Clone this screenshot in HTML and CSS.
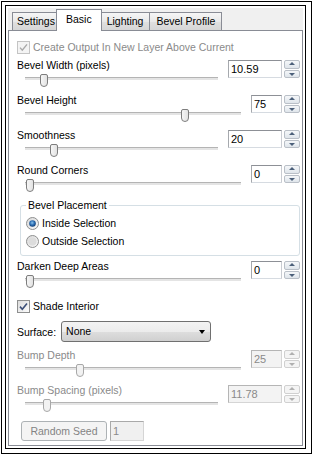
FILE: index.html
```html
<!DOCTYPE html>
<html>
<head>
<meta charset="utf-8">
<link rel="stylesheet" href="styles.css">
</head>
<body>
<div class="outer">
 <div class="inner">
  <div class="dialog">
   <div class="tabs">
    <div class="tab">Settings</div>
    <div class="tab active">Basic</div>
    <div class="tab">Lighting</div>
    <div class="tab">Bevel Profile</div>
   </div>
   <div class="page">
    <div class="check-row disabled">
     <span class="cbox"><svg width="11" height="11" viewBox="0 0 11 11"><path d="M2 5.6 L4.3 8.2 L9 2.4" fill="none" stroke="#a9a9a9" stroke-width="1.4"/></svg></span>
     <span>Create Output In New Layer Above Current</span>
    </div>

    <div class="field first">
     <div class="fcol">
      <div class="label">Bevel Width (pixels)</div>
      <div class="slider"><div class="track"></div><div class="thumb" style="left:15px"></div></div>
     </div>
     <div class="spin wide"><div class="edit">10.59</div><div class="arrows"><span class="up"></span><span class="down"></span></div></div>
    </div>

    <div class="field">
     <div class="fcol">
      <div class="label">Bevel Height</div>
      <div class="slider"><div class="track"></div><div class="thumb" style="left:156px"></div></div>
     </div>
     <div class="spin narrow"><div class="edit">75</div><div class="arrows"><span class="up"></span><span class="down"></span></div></div>
    </div>

    <div class="field">
     <div class="fcol">
      <div class="label">Smoothness</div>
      <div class="slider"><div class="track"></div><div class="thumb" style="left:25px"></div></div>
     </div>
     <div class="spin wide"><div class="edit">20</div><div class="arrows"><span class="up"></span><span class="down"></span></div></div>
    </div>

    <div class="field">
     <div class="fcol">
      <div class="label">Round Corners</div>
      <div class="slider"><div class="track"></div><div class="thumb" style="left:1px"></div></div>
     </div>
     <div class="spin narrow"><div class="edit">0</div><div class="arrows"><span class="up"></span><span class="down"></span></div></div>
    </div>

    <fieldset class="group">
     <legend>Bevel Placement</legend>
     <div class="radio-row">
      <svg class="radio" width="13" height="13" viewBox="0 0 13 13">
       <defs>
        <radialGradient id="dot" cx="45%" cy="40%" r="60%"><stop offset="0" stop-color="#8cc4ec"/><stop offset="0.55" stop-color="#2b6db3"/><stop offset="1" stop-color="#133e73"/></radialGradient>
        <linearGradient id="rbg" x1="0" y1="0" x2="1" y2="1"><stop offset="0" stop-color="#d8d8d8"/><stop offset="1" stop-color="#fbfbfb"/></linearGradient>
       </defs>
       <circle cx="6.5" cy="6.5" r="6" fill="url(#rbg)" stroke="#8e8f8f"/>
       <circle cx="6.5" cy="6.5" r="3.3" fill="url(#dot)"/>
      </svg>
      <span>Inside Selection</span>
     </div>
     <div class="radio-row">
      <svg class="radio" width="13" height="13" viewBox="0 0 13 13">
       <circle cx="6.5" cy="6.5" r="6" fill="url(#rbg)" stroke="#8e8f8f"/>
       <circle cx="6.5" cy="6.5" r="4" fill="#dcdcdc"/>
      </svg>
      <span>Outside Selection</span>
     </div>
    </fieldset>

    <div class="field darken">
     <div class="fcol">
      <div class="label">Darken Deep Areas</div>
      <div class="slider"><div class="track"></div><div class="thumb" style="left:1px"></div></div>
     </div>
     <div class="spin narrow"><div class="edit">0</div><div class="arrows"><span class="up"></span><span class="down"></span></div></div>
    </div>

    <div class="check-row shade">
     <span class="cbox on"><svg width="11" height="11" viewBox="0 0 11 11"><path d="M2 5.6 L4.3 8.2 L9 2.4" fill="none" stroke="#3c4f78" stroke-width="1.6"/></svg></span>
     <span>Shade Interior</span>
    </div>

    <div class="surface-row">
     <span class="surface-label">Surface:</span>
     <div class="combo"><span>None</span><span class="caret"></span></div>
    </div>

    <div class="field bump disabled">
     <div class="fcol">
      <div class="label">Bump Depth</div>
      <div class="slider"><div class="track"></div><div class="thumb" style="left:51px"></div></div>
     </div>
     <div class="spin narrow"><div class="edit">25</div><div class="arrows"><span class="up"></span><span class="down"></span></div></div>
    </div>

    <div class="field disabled">
     <div class="fcol">
      <div class="label">Bump Spacing (pixels)</div>
      <div class="slider"><div class="track"></div><div class="thumb" style="left:18px"></div></div>
     </div>
     <div class="spin wide"><div class="edit">11.78</div><div class="arrows"><span class="up"></span><span class="down"></span></div></div>
    </div>

    <div class="button-row">
     <div class="btn">Random Seed</div>
     <div class="seed">1</div>
    </div>
   </div>
  </div>
 </div>
</div>
</body>
</html>
```
FILE: styles.css
```css
* { box-sizing: border-box; }
html, body { margin: 0; padding: 0; background: #fff; }
body {
  font-family: "Liberation Sans", Arial, sans-serif;
  font-size: 10.5px;
  color: #000;
  width: 312px;
  height: 455px;
  overflow: hidden;
}
.outer {
  margin: 1px 0 0 1px;
  width: 311px;
  border: 1px solid #000;
  padding: 3px 5px 4px 3px;
  background: #fff;
}
.inner {
  height: 444px;
  border: 1px solid #000;
  padding: 2px;
  background: #fff;
}
.dialog {
  height: 100%;
  display: flex;
  flex-direction: column;
  background: #f0f0f0;
}
.tabs {
  height: 22px;
  flex: none;
  display: flex;
  align-items: flex-end;
  padding-left: 4px;
}
.tab {
  height: 18px;
  line-height: 16px;
  padding: 0 6px;
  border: 1px solid #898c95;
  border-bottom: none;
  margin-right: -1px;
  background: linear-gradient(#f6f6f6, #e9e9e9 50%, #e0e0e0 51%, #d6d6d6);
  white-space: nowrap;
}
.tab:first-child { padding: 0 4px; }
.tab.active {
  height: 22px;
  line-height: 18px;
  margin: 0 -2px -1px -3px;
  padding: 0 9px;
  background: #fff;
  position: relative;
  z-index: 1;
}
.page {
  flex: 1;
  border: 1px solid #898c95;
  background: #fff;
  padding: 10px 2px 0 8px;
}
.check-row {
  display: flex;
  align-items: center;
  gap: 3px;
  height: 13px;
  line-height: 13px;
  white-space: nowrap;
}
.check-row.disabled { color: #8a8a8a; }
.cbox {
  width: 13px;
  height: 13px;
  border: 1px solid #8e8f8f;
  background: linear-gradient(135deg, #dcdcdc, #fcfcfc);
  display: flex;
  align-items: center;
  justify-content: center;
  flex: none;
}
.check-row.disabled .cbox { border-color: #c4c4c4; background: #f4f4f4; }
.field {
  display: flex;
  align-items: flex-start;
  gap: 10px;
  margin-top: 6px;
}
.field.first { margin-top: 5px; }
.field.darken { margin-top: 4px; }
.field.bump { margin-top: 7px; }
.fcol { flex: 1; min-width: 0; }
.label {
  height: 13px;
  line-height: 13px;
  white-space: nowrap;
}
.field.disabled .label { color: #8a8a8a; }
.slider {
  position: relative;
  height: 14px;
  margin: 2px 0 0 8px;
}
.track {
  position: absolute;
  left: 0;
  right: 0;
  top: 3px;
  height: 3px;
  border-top: 1px solid #b4b4b4;
  background: #e4e4e4;
}
.thumb {
  position: absolute;
  top: 0;
  width: 8px;
  height: 13px;
  border: 1px solid #7d7d7d;
  border-radius: 2px 2px 4px 4px;
  background: linear-gradient(90deg, #f6f6f6, #e2e2e2);
}
.field.disabled .thumb { border-color: #a8a8a8; background: #f2f2f2; }
.spin {
  display: flex;
  margin-top: 1px;
  height: 18px;
  flex: none;
}
.edit {
  width: 54px;
  border: 1px solid;
  border-color: #8d9096 #c9ccd2 #d6dbe1 #a6a9ae;
  padding-left: 2px;
  line-height: 16px;
  background: #fff;
  font-size: 11px;
}
.spin.narrow .edit { width: 31px; }
.field.disabled .edit { background: #f3f3f3; color: #8a8a8a; border-color: #b5b5b5 #d5d5d5 #d5d5d5 #b5b5b5; }
.arrows {
  width: 16px;
  margin-left: 2px;
  display: flex;
  flex-direction: column;
  gap: 1px;
}
.arrows span {
  flex: 1;
  border: 1px solid #b9bfc7;
  border-radius: 2px;
  background: linear-gradient(#f5f7f9, #dfe5eb);
  position: relative;
}
.arrows span::after {
  content: "";
  position: absolute;
  left: 50%;
  top: 50%;
  margin-left: -3px;
  border-left: 3px solid transparent;
  border-right: 3px solid transparent;
}
.arrows .up::after { border-bottom: 3px solid #4c607a; margin-top: -2px; }
.arrows .down::after { border-top: 3px solid #4c607a; margin-top: -1px; }
.field.disabled .arrows span { border-color: #d0d0d0; background: #f4f4f4; }
.field.disabled .arrows span::after { border-top-color: #b0b0b0; border-bottom-color: #b0b0b0; }
.group {
  margin: 6px 0 0 3px;
  padding: 0 5px 7px;
  border: 1px solid #d5dfe5;
  border-radius: 3px;
  min-width: 0;
}
.group legend {
  padding: 0 2px;
  line-height: 13px;
}
.radio-row {
  display: flex;
  align-items: center;
  gap: 3px;
  height: 13px;
  line-height: 13px;
  margin-top: 5px;
  white-space: nowrap;
}
.radio { flex: none; }
.check-row.shade { margin-top: 11px; }
.surface-row {
  display: flex;
  align-items: center;
  gap: 5px;
  margin-top: 8px;
  height: 21px;
}
.combo {
  width: 150px;
  height: 21px;
  border: 1px solid #707070;
  border-radius: 3px;
  background: linear-gradient(#f3f3f3, #ececec 50%, #dedede 51%, #d0d0d0);
  padding-left: 4px;
  line-height: 19px;
  display: flex;
  justify-content: space-between;
  align-items: center;
}
.caret {
  width: 0;
  height: 0;
  border-left: 3.5px solid transparent;
  border-right: 3.5px solid transparent;
  border-top: 4px solid #000;
  margin-right: 5px;
}
.button-row {
  display: flex;
  gap: 3px;
  margin: 8px 0 0 4px;
}
.btn {
  width: 86px;
  height: 20px;
  border: 1px solid #adb2b5;
  border-radius: 3px;
  background: #f4f4f4;
  color: #838383;
  text-align: center;
  line-height: 18px;
}
.seed {
  width: 34px;
  height: 20px;
  border: 1px solid;
  border-color: #a9a9a9 #d5d5d5 #d5d5d5 #a9a9a9;
  background: #f0f0f0;
  color: #8a8a8a;
  padding-left: 2px;
  line-height: 18px;
  font-size: 11px;
}
```
